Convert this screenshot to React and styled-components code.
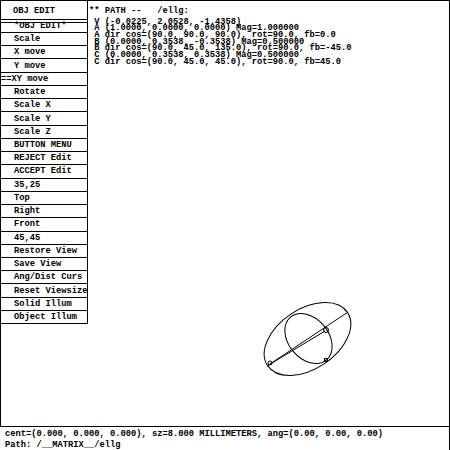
import React from "react";
import styled, { createGlobalStyle } from "styled-components";

const Global = createGlobalStyle`
  html, body { margin: 0; padding: 0; background: #fff; }
`;

const Screen = styled.div`
  width: 450px;
  height: 450px;
  box-sizing: border-box;
  background: #fff;
  color: #000;
  border-top: 1px solid #000;
  border-right: 1px solid #000;
  display: flex;
  flex-direction: column;
  overflow: hidden;
  font-family: "Liberation Mono", monospace;
  font-size: 8.75px;
  font-weight: 700;
`;

const Upper = styled.div`
  flex: 1;
  min-height: 0;
  display: flex;
  align-items: flex-start;
  border-left: 1px solid #000;
`;

const Menu = styled.div`
  width: 87px;
  height: 323px;
  box-sizing: border-box;
  flex: none;
  display: flex;
  flex-direction: column;
  border-right: 1px solid #000;
  border-bottom: 1px solid #000;
`;

const MenuTitle = styled.div`
  flex: none;
  height: 18px;
  line-height: 20px;
  padding-left: 12px;
  border-bottom: 4px double #000;
`;

const MenuItem = styled.div`
  flex: ${(p) => (p.$short ? "none" : "1")};
  height: ${(p) => (p.$short ? "10px" : "auto")};
  box-sizing: border-box;
  min-height: 0;
  display: flex;
  align-items: ${(p) => (p.$short ? "flex-start" : "center")};
  line-height: ${(p) => (p.$short ? "7px" : "10px")};
  padding-left: ${(p) => p.$indent}px;
  border-bottom: 1px solid #000;
  white-space: pre;
  &:last-child { border-bottom: 0; }
`;

const Stage = styled.div`
  position: relative;
  flex: 1;
  align-self: stretch;
`;

const ListingHead = styled.div`
  padding: 7px 0 0 1px;
  line-height: 7px;
  white-space: pre;
`;

const Listing = styled.pre`
  margin: 3.5px 0 0;
  padding-left: 1px;
  font: inherit;
  line-height: 6.7px;
`;

const Drawing = styled.svg`
  position: absolute;
  left: 172px;
  top: 295px;
`;

const Status = styled.div`
  flex: none;
  height: 24px;
  box-sizing: border-box;
  border-top: 1px solid #000;
  padding: 2px 0 0 5px;
  line-height: 10.5px;
  white-space: pre;
`;

const items = [
  ["*OBJ EDIT*", 13], ["Scale", 13], ["X move", 13], ["Y move", 13], ["==XY move", 0],
  ["Rotate", 13], ["Scale X", 13], ["Scale Y", 13], ["Scale Z", 13], ["BUTTON MENU", 13],
  ["REJECT Edit", 13], ["ACCEPT Edit", 13], ["35,25", 13], ["Top", 13], ["Right", 13],
  ["Front", 13], ["45,45", 13], ["Restore View", 13], ["Save View", 13], ["Ang/Dist Curs", 13],
  ["Reset Viewsize", 13], ["Solid Illum", 13], ["Object Illum", 13],
];

const listing = ` V (-0.0225, 2.0528, -1.4358)
 A (1.0000, 0.0000, 0.0000) Mag=1.000000
 A dir cos=(90.0, 90.0, 90.0), rot=90.0, fb=0.0
 B (0.0000, 0.3538, -0.3538) Mag=0.500000
 B dir cos=(90.0, 45.0, 135.0), rot=90.0, fb=-45.0
 C (0.0000, 0.3538, 0.3538) Mag=0.500000
 C dir cos=(90.0, 45.0, 45.0), rot=90.0, fb=45.0`;

export default function App() {
  return (
    <>
      <Global />
      <Screen>
        <Upper>
          <Menu>
            <MenuTitle>OBJ EDIT</MenuTitle>
            {items.map(([t, i], n) => (
              <MenuItem key={t} $indent={i} $short={n === 0}>{t}</MenuItem>
            ))}
          </Menu>
          <Stage>
            <ListingHead>{"** PATH --   /ellg:"}</ListingHead>
            <Listing>{listing}</Listing>
            <Drawing width="100" height="90" viewBox="260 296 100 90" fill="none" stroke="#000" strokeWidth="1">
              <ellipse cx="307.5" cy="339" rx="48" ry="30" transform="rotate(-33.7 307.5 339)" />
              <ellipse cx="308.5" cy="338.5" rx="28" ry="20" transform="rotate(50 308.5 338.5)" />
              <path d="M267 366 L348 312" />
              <path d="M267 366 L325 331" />
              <circle cx="270" cy="363" r="2" />
              <rect x="324.5" y="358.5" width="3" height="3" />
              <circle cx="326" cy="330" r="2.5" />
            </Drawing>
          </Stage>
        </Upper>
        <Status>{`cent=(0.000, 0.000, 0.000), sz=8.000 MILLIMETERS, ang=(0.00, 0.00, 0.00)
Path: /__MATRIX__/ellg`}</Status>
      </Screen>
    </>
  );
}
